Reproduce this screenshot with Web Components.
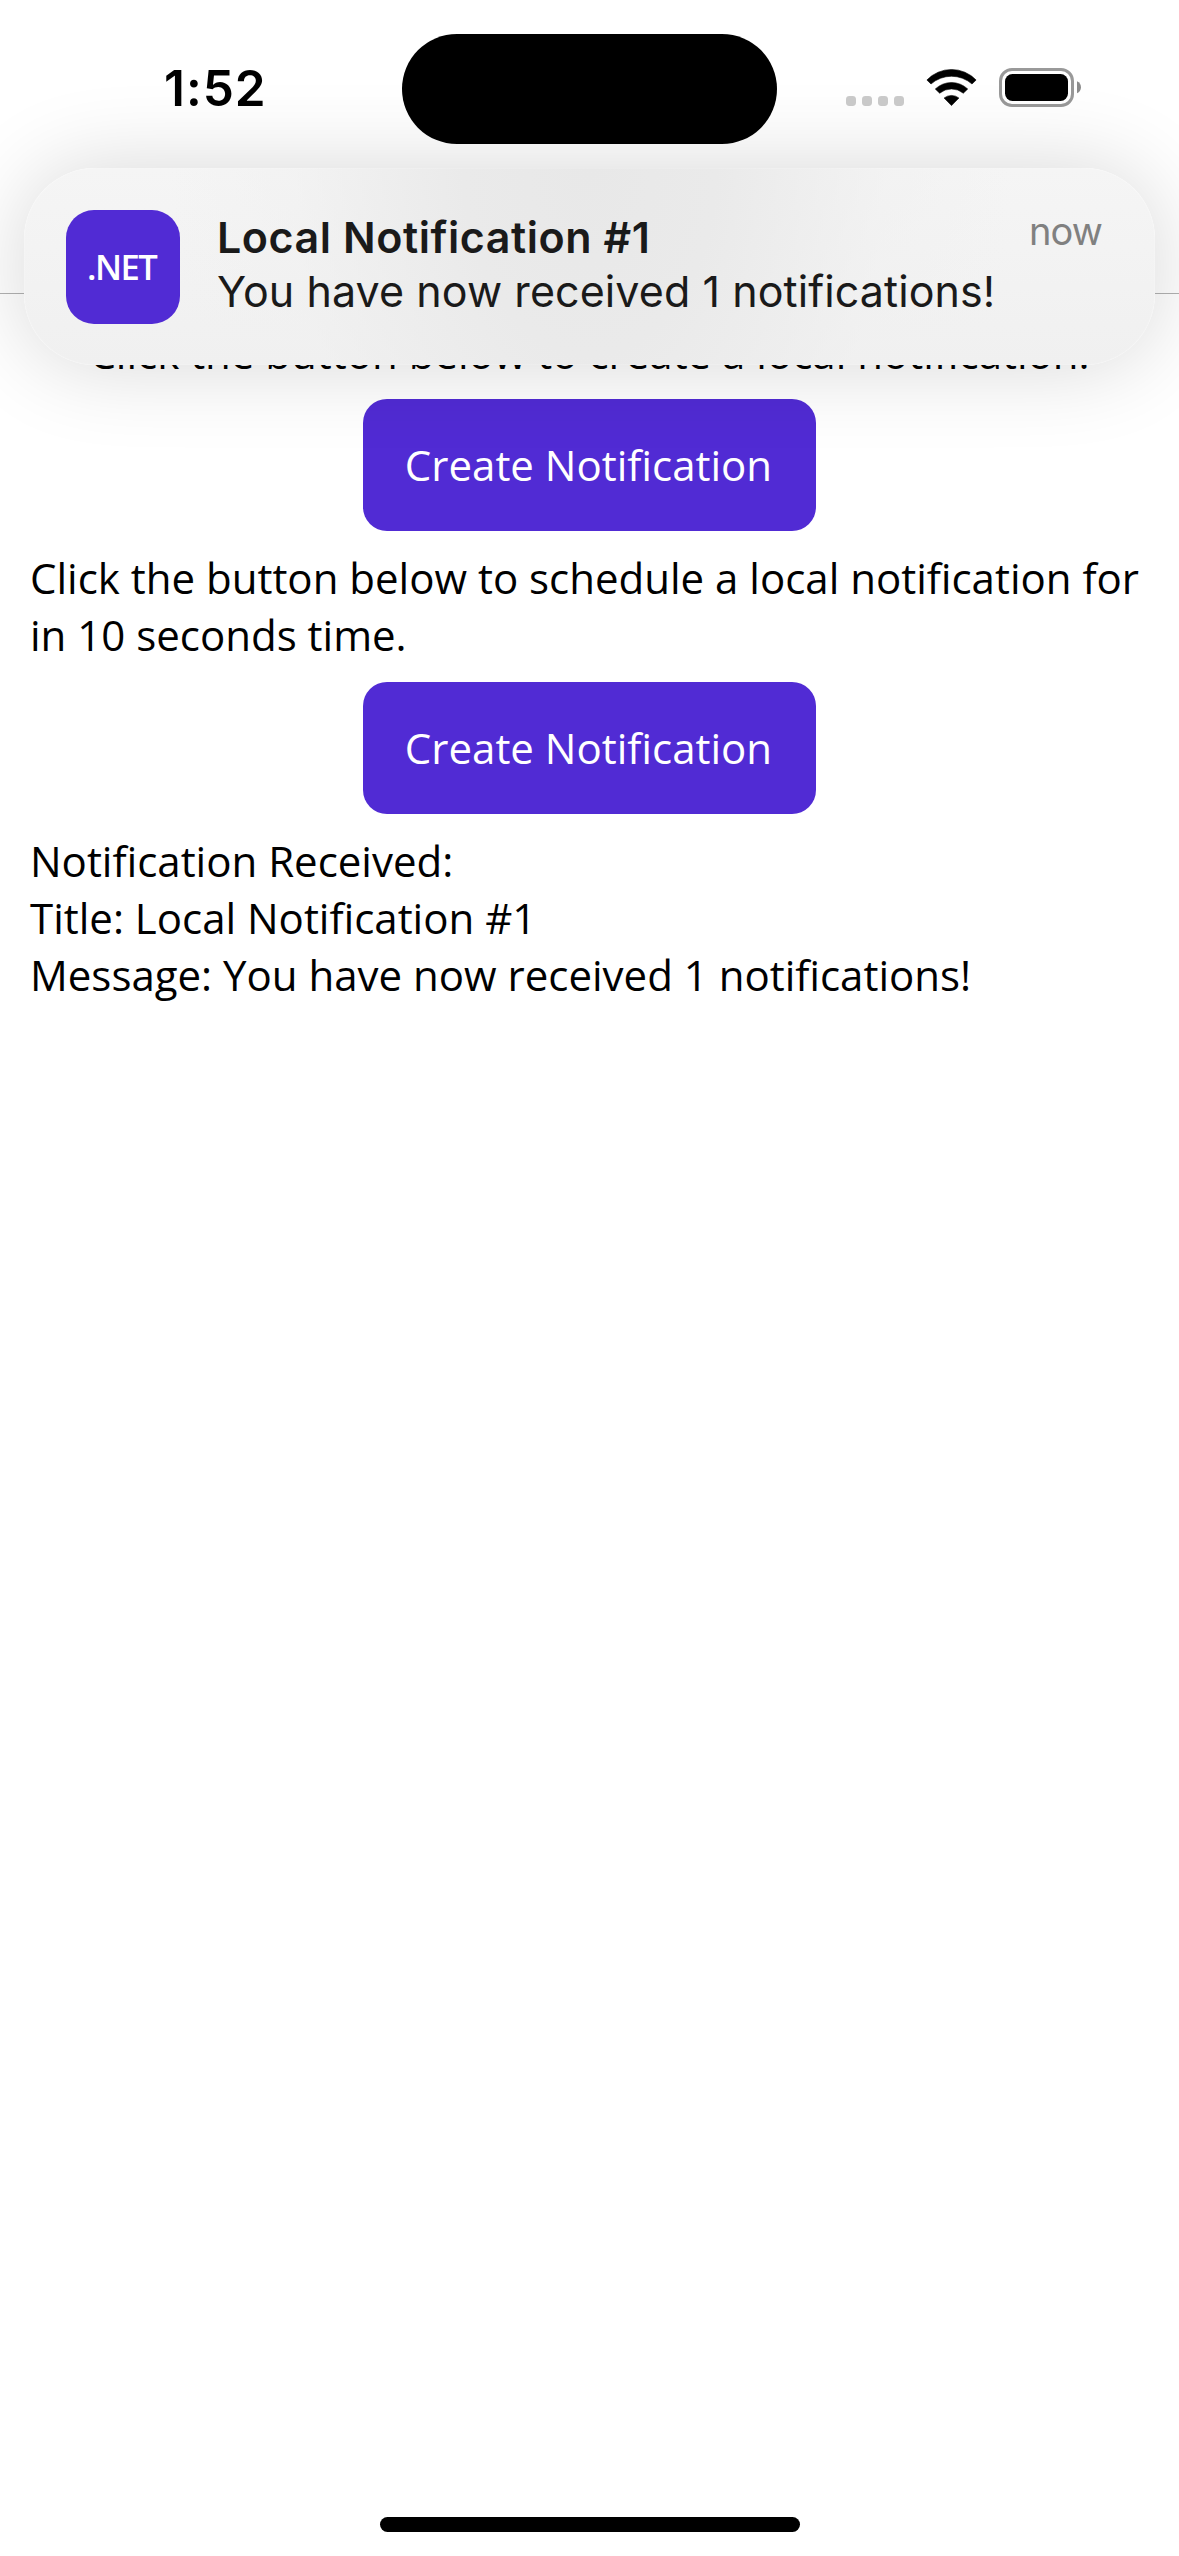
<!DOCTYPE html>
<html lang="en">
<head>
<meta charset="utf-8">
<title>Local Notifications</title>
<style>
  html, body { margin: 0; background: #fff; }
</style>
</head>
<body>
<phone-screen></phone-screen>
<script>
const define = (name, html) => {
  const template = document.createElement('template');
  template.innerHTML = html;
  customElements.define(name, class extends HTMLElement {
    constructor() {
      super();
      this.attachShadow({ mode: 'open' }).append(template.content.cloneNode(true));
    }
  });
};

define('status-time', `
  <style>
    :host { display: block; font: 600 49.5px/60px Inter, sans-serif; letter-spacing: 1px; color: #000; white-space: nowrap; }
  </style><slot></slot>`);

define('dynamic-island', `
  <style>:host { display: block; width: 375px; height: 110px; border-radius: 55px; background: #000; }</style>`);

define('status-icons', `
  <style>
    :host { display: flex; align-items: flex-start; }
    svg { display: block; }
    .cell { margin: 28px 22px 0 0; }
    .wifi { margin: 1px 22px 0 0; }
  </style>
  <svg class="cell" width="58" height="10" viewBox="0 0 58 10" fill="#cbcbcb">
    <rect width="10" height="10" rx="3.4"/><rect x="16" width="10" height="10" rx="3.4"/>
    <rect x="32" width="10" height="10" rx="3.4"/><rect x="48" width="10" height="10" rx="3.4"/>
  </svg>
  <svg class="wifi" width="51" height="38" viewBox="-0.5 0 51 38" fill="#000" stroke="#000" stroke-width=".6" stroke-linejoin="round">
    <path d="M.4 11A34 34 0 0 1 49.6 11L45.5 15A31 31 0 0 0 4.5 15Z"/>
    <path d="M8.8 20A23.5 23.5 0 0 1 41.2 20L36.8 24.2A18.5 18.5 0 0 0 13.2 24.2Z"/>
    <path d="M17.6 29A12 12 0 0 1 32.4 29L25 36.6Z"/>
  </svg>
  <svg width="83" height="39" viewBox="0 0 83 39">
    <rect x="1.5" y="1.5" width="72" height="36" rx="11.5" fill="none" stroke="#999" stroke-width="3"/>
    <rect x="6" y="6" width="63" height="27" rx="7.5"/>
    <path d="M78 13.3C80.7 14.4 82 16.8 82 19.3S80.7 24.2 78 25.3Z" fill="#8c8c8c"/>
  </svg>`);

define('screen-header', `
  <style>
    :host { display: flex; justify-content: space-between; align-items: flex-start; box-sizing: border-box;
      height: 294px; padding: 58px 97px 0 164px; border-bottom: 1px solid #b2b2b2; }
    status-icons { margin-top: 10px; }
  </style>
  <status-time>1:52</status-time><status-icons></status-icons>`);

define('text-label', `
  <style>
    :host { display: block; font: 400 42px/57.2px "Open Sans", sans-serif; color: #000; }
    :host([centered]) { text-align: center; }
    span { white-space: pre-line; }
  </style><span><slot></slot></span>`);

define('action-button', `
  <style>
    :host { display: block; align-self: center; }
    button { display: block; width: 453px; height: 132px; border: 0; border-radius: 24px; padding: 0 2px 1px 0; margin: 0;
      background: #512bd4; color: #fff; font: 400 42px/57px "Open Sans", sans-serif; }
  </style><button><slot></slot></button>`);

define('app-icon', `
  <style>
    :host { display: flex; align-items: center; justify-content: center; box-sizing: border-box; width: 114px; height: 114px;
      padding-right: 2.8px; border-radius: 28px; background: #512bd4; color: #fff;
      font: 600 34.6px/48px "Open Sans", sans-serif; letter-spacing: -1.6px; }
  </style><span><slot></slot></span>`);

define('notification-banner', `
  <style>
    :host { display: flex; box-sizing: border-box; height: 197px; padding: 42px 53px 0 42px; border-radius: 71px;
      background: radial-gradient(ellipse 420px 620px at 50% 0, #e8e8e8, #eaeaea 30%, rgba(240,240,240,.5) 70%, rgba(244,244,244,0)),
        linear-gradient(#f5f5f5, #f0f0f0);
      box-shadow: 0 0 88px rgba(0,0,0,.16), inset 0 0 1.5px rgba(255,255,255,.9);
      color: #1a1a1a; }
    .copy { flex: 1; margin-left: 37px; white-space: nowrap; }
    .title { font: 600 43px/54px Inter, sans-serif; letter-spacing: .55px; }
    .body { font: 400 43px/54px Inter, sans-serif; letter-spacing: .08px; }
    .time { margin-top: -3px; font: 400 38px/48px Inter, sans-serif; letter-spacing: -.9px; color: #808080; }
  </style>
  <app-icon>.NET</app-icon>
  <div class="copy">
    <div class="title"><slot name="title"></slot></div>
    <div class="body"><slot name="body"></slot></div>
  </div>
  <div class="time"><slot name="time"></slot></div>`);

define('home-indicator', `
  <style>:host { display: block; width: 420px; height: 15px; border-radius: 7.5px; background: #000; }</style>`);

define('phone-screen', `
  <style>
    :host { display: flex; flex-direction: column; position: relative; width: 1179px; height: 2556px; overflow: hidden; background: #fff; }
    main { flex: 1; display: flex; flex-direction: column; gap: 18px; padding: 30px; }
    notification-banner { position: absolute; left: 24px; right: 24px; top: 168px; }
    dynamic-island { position: absolute; left: 402px; top: 34px; }
    home-indicator { align-self: center; margin-bottom: 24px; }
  </style>
  <screen-header></screen-header>
  <main>
    <text-label centered>Click the button below to create a local notification.</text-label>
    <action-button>Create Notification</action-button>
    <text-label>Click the button below to schedule a local notification for in 10 seconds time.</text-label>
    <action-button>Create Notification</action-button>
    <text-label>Notification Received:
Title: Local Notification #1
Message: You have now received 1 notifications!</text-label>
  </main>
  <home-indicator></home-indicator>
  <notification-banner>
    <span slot="title">Local Notification #1</span>
    <span slot="body">You have now received 1 notifications!</span>
    <span slot="time">now</span>
  </notification-banner>
  <dynamic-island></dynamic-island>`);
</script>
</body>
</html>
